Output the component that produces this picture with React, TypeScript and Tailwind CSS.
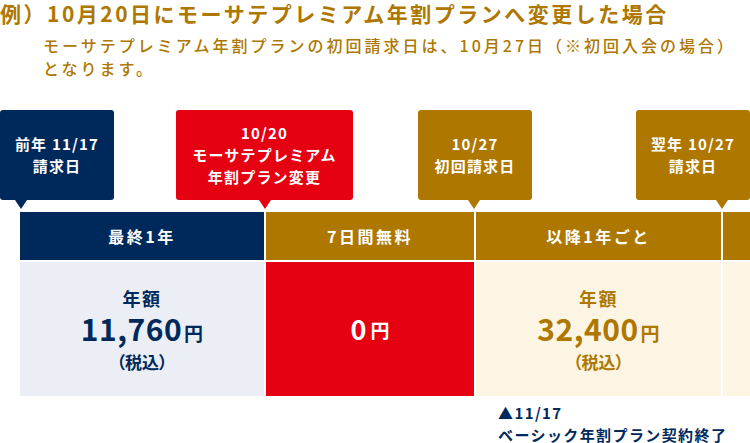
const navy = 'bg-[#00295b]';

type Bubble = {
  lines: string[];
  bg: string;
  tri: string;
  width: string;
  gap: string;
  tip: string;
};

const bubbles: Bubble[] = [
  { lines: ['前年 11/17', '請求日'], bg: navy, tri: 'border-t-[#00295b]', width: 'w-[114px]', gap: 'ml-0', tip: 'left-[15px]' },
  { lines: ['10/20', 'モーサテプレミアム', '年割プラン変更'], bg: 'bg-[#e50012]', tri: 'border-t-[#e50012]', width: 'w-[177px]', gap: 'ml-[62px]', tip: 'left-[83px]' },
  { lines: ['10/27', '初回請求日'], bg: 'bg-[#ae7700]', tri: 'border-t-[#ae7700]', width: 'w-[114px]', gap: 'ml-[65px]', tip: 'left-[50px]' },
  { lines: ['翌年 10/27', '請求日'], bg: 'bg-[#ae7700]', tri: 'border-t-[#ae7700]', width: 'w-[114px]', gap: 'ml-[104px]', tip: 'left-[80px]' },
];

const Price = ({ amount, color }: { amount: string; color: string }) => (
  <div className={`flex flex-col items-center ${color}`}>
    <div className="text-[18px] font-bold leading-[26px] tracking-[1.5px]">年額</div>
    <div className="flex items-baseline font-bold leading-[34px]">
      <span className="text-[30px] tracking-[0.5px]">{amount}</span>
      <span className="text-[19px] ml-[2px]">円</span>
    </div>
    <div className="text-[17px] font-bold leading-[24px] [font-feature-settings:'palt']">（税込）</div>
  </div>
);

export default function App() {
  return (
    <div className="w-[750px] h-[443px] overflow-hidden bg-white [font-family:'Noto_Sans_CJK_JP','Noto_Sans',sans-serif]">
      {/* Heading */}
      <h1 className="text-[21px] font-bold leading-[26px] tracking-[2.5px] text-[#ae7700] whitespace-nowrap">
        例）10月20日にモーサテプレミアム年割プランへ変更した場合
      </h1>
      <p className="mt-[8px] pl-[43px] text-[16px] font-medium leading-[23px] tracking-[3px] text-[#ae7700] whitespace-nowrap">
        モーサテプレミアム年割プランの初回請求日は、10月27日（※初回入会の場合）
        <br />
        となります。
      </p>

      {/* Callouts */}
      <div className="mt-[30px] flex h-[90px]">
        {bubbles.map((b, i) => (
          <div
            key={i}
            className={`relative shrink-0 ${b.width} ${b.gap} ${b.bg} rounded-[3px] flex flex-col items-center justify-center text-white text-[15px] font-bold leading-[22px] tracking-[0.08em] text-center`}
          >
            {b.lines.map((l) => (
              <div key={l} className="whitespace-nowrap">{l}</div>
            ))}
            <div
              className={`absolute top-full ${b.tip} w-0 h-0 border-l-[6px] border-r-[6px] border-t-[9px] border-l-transparent border-r-transparent ${b.tri}`}
            />
          </div>
        ))}
      </div>

      {/* Timeline */}
      <div className="mt-[12px] flex gap-[2px] pl-[20px]">
        <div className="w-[244px] shrink-0 flex flex-col gap-[2px]">
          <div className={`h-[48px] ${navy} flex items-center justify-center text-white text-[16px] font-bold tracking-[2.5px]`}>
            最終1年
          </div>
          <div className="h-[134px] bg-[#ebeef4] flex items-center justify-center">
            <Price amount="11,760" color="text-[#00295b]" />
          </div>
        </div>
        <div className="w-[208px] shrink-0 flex flex-col gap-[2px]">
          <div className="h-[48px] bg-[#ae7700] flex items-center justify-center text-white text-[16px] font-bold tracking-[2.5px]">
            7日間無料
          </div>
          <div className="h-[134px] bg-[#e50012] flex items-center justify-center text-white font-bold">
            <span className="text-[27px]">0</span>
            <span className="text-[19px] ml-[4px] mt-[3px]">円</span>
          </div>
        </div>
        <div className="w-[245px] shrink-0 flex flex-col gap-[2px]">
          <div className="h-[48px] bg-[#ae7700] flex items-center justify-center text-white text-[16px] font-bold tracking-[2.5px]">
            以降1年ごと
          </div>
          <div className="h-[134px] bg-[#fcf5e3] flex items-center justify-center">
            <Price amount="32,400" color="text-[#ae7700]" />
          </div>
        </div>
        <div className="flex-1 flex flex-col gap-[2px]">
          <div className="h-[48px] bg-[#ae7700]" />
          <div className="h-[134px] bg-[#fcf5e3]" />
        </div>
      </div>

      {/* Note */}
      <div className="mt-[6px] pl-[498px] text-[15px] font-bold leading-[22px] tracking-[1.4px] text-[#00295b] whitespace-nowrap">
        <div>▲11/17</div>
        <div>ベーシック年割プラン契約終了</div>
      </div>
    </div>
  );
}
